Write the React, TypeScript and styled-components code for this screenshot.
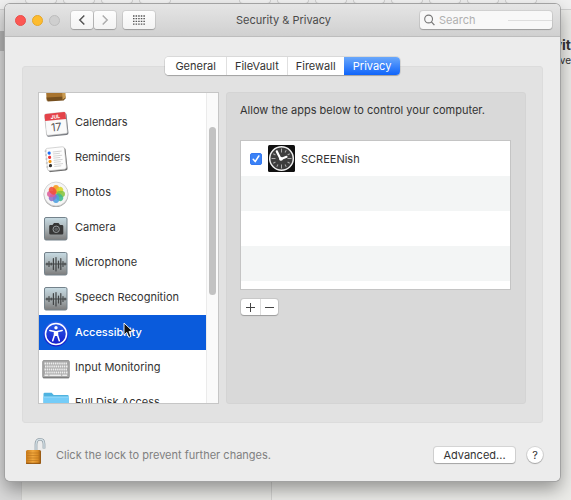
import React, { useLayoutEffect, useRef, useState } from "react";
import styled, { createGlobalStyle, css } from "styled-components";

const GlobalStyle = createGlobalStyle`
  *, *::before, *::after { box-sizing: border-box; }
  body { margin: 0; overflow: hidden; }
  body, button, input {
    font-family: Inter, "Liberation Sans", sans-serif;
    font-size: 11px;
    line-height: 14px;
    color: #333;
  }
  button, input { margin: 0; padding: 0; border: 0; }
`;

/* ---------- Desktop behind the window ---------- */

const Desktop = styled.div`
  position: relative;
  height: 100vh;
  min-height: 360px;
  padding: 4px 11px 19px 5px;
  overflow: hidden;
  background: #ebebe8;
`;

const Backdrop = styled.div`
  position: absolute;
  inset: 0;
  display: flex;
  flex-direction: column;
`;

const BackdropToolbar = styled.div`
  height: 10px;
  flex: none;
  padding-left: 25px;
  display: flex;
  gap: 6px;
  background: #f0f0f0;
  border-bottom: 1px solid #cfcfcf;
`;

const BackdropKey = styled.div<{ $apart?: boolean }>`
  width: 32px;
  height: 4px;
  flex: none;
  margin-left: ${(p) => (p.$apart ? "62px" : "0")};
  border: 1px solid #d0d0d0;
  border-top: 0;
  border-radius: 0 0 4px 4px;
  background: #f4f4f4;
`;

const BackdropBody = styled.div`
  flex: 1;
  display: grid;
  grid-template-columns: 22px 250px 1fr;
`;

const BackdropColumn = styled.div<{ $side?: boolean }>`
  border-right: 1px solid #d2d2d0;
  background: ${(p) =>
    p.$side
      ? "linear-gradient(#e2e2e2 0 21px, #b4b4b4 21px 41px, #d9d9d9 41px)"
      : "#e8e8e5"};
`;

const BackdropArticle = styled.div`
  padding: 26px 0 0;
  text-align: right;
  white-space: nowrap;
  overflow: hidden;
`;

const BackdropHeading = styled.div`
  font-size: 14px;
  line-height: 17px;
  font-weight: 700;
`;

const BackdropLine = styled.div`
  font-size: 10px;
  line-height: 14px;
`;

/* ---------- Window ---------- */

const Window = styled.main`
  position: relative;
  height: 100%;
  display: flex;
  flex-direction: column;
  background: #ececec;
  border-radius: 5px;
  overflow: hidden;
`;

const WindowShadow = styled.div`
  position: relative;
  height: 100%;
  border-radius: 5px;
  box-shadow: 0 0 0 1px #a2a2a2, 0 8px 18px rgba(0, 0, 0, 0.38);
`;

const TitleBar = styled.header`
  height: 33px;
  flex: none;
  padding: 0 8px 0 10px;
  display: grid;
  grid-template-columns: 1fr auto 1fr;
  align-items: center;
  background: linear-gradient(#e5e5e5, #d0d0d0);
  border-bottom: 1px solid #bdbdbd;
`;

const BarGroup = styled.div`
  display: flex;
  align-items: center;
`;

const Lights = styled.div`
  display: flex;
  gap: 6px;
  margin-right: 11px;
`;

const Light = styled.button<{ $color: string; $edge: string }>`
  width: 11px;
  height: 11px;
  border-radius: 50%;
  background: ${(p) => p.$color};
  border: 1px solid ${(p) => p.$edge};
`;

const BarButton = styled.button<{ $wide?: boolean }>`
  width: ${(p) => (p.$wide ? "32px" : "22px")};
  height: 18px;
  margin-right: ${(p) => (p.$wide ? "0" : "1px")};
  margin-left: ${(p) => (p.$wide ? "6px" : "0")};
  display: grid;
  place-items: center;
  border-radius: 3px;
  background: linear-gradient(#fdfdfd, #f3f3f3);
  box-shadow: 0 0 0 1px rgba(0, 0, 0, 0.07), 0 1px 1px rgba(0, 0, 0, 0.2);
`;

const Title = styled.h1`
  margin: 0;
  font-size: 11px;
  font-weight: 400;
  line-height: 14px;
  color: #4a4a4a;
`;

const SearchBox = styled.label`
  justify-self: end;
  width: 132px;
  height: 18px;
  padding-left: 4px;
  display: flex;
  align-items: center;
  gap: 4px;
  border-radius: 3px;
  background: linear-gradient(#dedede, #dedede) right center / 44px 1px no-repeat, #f8f8f8;
  box-shadow: 0 0 0 1px rgba(0, 0, 0, 0.07), 0 1px 1px rgba(0, 0, 0, 0.2);
`;

const SearchInput = styled.input`
  flex: 1;
  min-width: 0;
  background: transparent;
  outline: none;
  &::placeholder { color: #b0b0b0; opacity: 1; }
`;

const Content = styled.div`
  flex: 1;
  min-height: 0;
  padding: 20px 17px 0;
  display: flex;
  flex-direction: column;
`;

const Tabs = styled.nav`
  z-index: 1;
  align-self: center;
  display: flex;
  margin-bottom: -9px;
  border-radius: 4px;
  overflow: hidden;
  background: #fff;
  box-shadow: 0 0 0 1px rgba(0, 0, 0, 0.08), 0 1px 1px rgba(0, 0, 0, 0.22);
`;

const Tab = styled.button<{ $active: boolean }>`
  height: 18px;
  padding: 0 8px;
  min-width: 56px;
  text-align: center;
  background: #fff;
  & + & { border-left: 1px solid #e0e0e0; }
  &:first-child { padding: 0 10px; }
  ${(p) =>
    p.$active &&
    css`
      color: #fff;
      background: linear-gradient(#6aa8fb, #0f64fa);
      && { border-left-color: transparent; background-origin: border-box; }
    `}
`;

const Panel = styled.section`
  flex: 1;
  min-height: 0;
  padding: 25px 16px 18px 15px;
  display: grid;
  grid-template-columns: 181px minmax(0, 1fr);
  grid-template-rows: minmax(0, 1fr);
  gap: 7px;
  background: #e2e2e2;
  border: 1px solid #dcdcdc;
  border-radius: 3px;
`;

/* ---------- Sidebar ---------- */

const Sidebar = styled.div`
  display: flex;
  min-height: 0;
  background: #fff;
  border: 1px solid #c6c6c6;
`;

const ServiceList = styled.ul`
  flex: 1;
  margin: 0;
  padding: 0;
  list-style: none;
  overflow-y: auto;
  scrollbar-width: none;
`;

const ServiceButton = styled.button<{ $selected: boolean }>`
  width: 100%;
  height: 35px;
  padding: 0 0 2px 3px;
  display: flex;
  align-items: center;
  gap: 5px;
  text-align: left;
  background: ${(p) => (p.$selected ? "#0a5bdc" : "transparent")};
  color: ${(p) => (p.$selected ? "#fff" : "#333")};
  font-weight: ${(p) => (p.$selected ? 500 : 400)};
`;

const ServiceIcon = styled.svg`
  width: 28px;
  height: 28px;
  flex: none;
  margin-top: 5px;
`;

const ServiceName = styled.span`
  position: relative;
`;

const Pointer = styled.svg`
  position: absolute;
  left: 48px;
  top: -3px;
  width: 11px;
  height: 17px;
`;

const Track = styled.div`
  width: 12px;
  padding: 34px 2px 108px;
  display: flex;
  background: #fafafa;
  border-left: 1px solid #ebebeb;
`;

const Thumb = styled.div`
  flex: 1;
  border-radius: 4px;
  background: #c2c2c2;
`;

/* ---------- Detail pane ---------- */

const Detail = styled.div`
  padding: 10px 14px 10px 13px;
  display: flex;
  flex-direction: column;
  align-items: flex-start;
  background: #d9d9d9;
  border: 1px solid #d4d4d4;
  border-radius: 3px;
`;

const Prompt = styled.p`
  margin: 0 0 23px;
`;

const AppList = styled.ul`
  align-self: stretch;
  height: 150px;
  margin: 0 0 9px;
  padding: 0;
  list-style: none;
  border: 1px solid #c4c4c4;
  background: repeating-linear-gradient(#fff 0 35px, #f3f5f5 35px 70px);
`;

const AppRow = styled.label`
  height: 35px;
  padding-left: 9px;
  display: flex;
  align-items: center;
  gap: 6px;
`;

const Tick = styled.input`
  appearance: none;
  width: 12px;
  height: 12px;
  border-radius: 2px;
  border: 1px solid #b5b5b5;
  background: #fff;
  &:checked {
    border-color: #3578f0;
    background: #3b82f6
      url("data:image/svg+xml,%3Csvg xmlns='http://www.w3.org/2000/svg' viewBox='0 0 10 10'%3E%3Cpath d='M2.2 5.3l2 2.3L7.8 2' fill='none' stroke='white' stroke-width='1.5' stroke-linecap='round' stroke-linejoin='round'/%3E%3C/svg%3E");
  }
`;

const AppIcon = styled.svg`
  width: 27px;
  height: 27px;
`;

const Stepper = styled.div`
  display: flex;
  margin-left: 1px;
  border-radius: 3px;
  background: #fff;
  box-shadow: 0 0 0 1px rgba(0, 0, 0, 0.08), 0 1px 1px rgba(0, 0, 0, 0.22);
`;

const StepButton = styled.button`
  width: 19px;
  height: 16px;
  display: grid;
  place-items: center;
  background: transparent;
  & + & { width: 18px; border-left: 1px solid #ddd; }
`;

/* ---------- Footer ---------- */

const Footer = styled.footer`
  height: 58px;
  flex: none;
  padding: 5px 17px 0 20px;
  display: flex;
  align-items: center;
`;

const LockButton = styled.button`
  display: flex;
  margin: 0 10px 7px 0;
  background: transparent;
`;

const Hint = styled.p`
  margin: 0;
  flex: 1;
  color: #808080;
`;

const PushButton = styled.button<{ $round?: boolean }>`
  width: ${(p) => (p.$round ? "16px" : "81px")};
  height: 16px;
  margin-left: ${(p) => (p.$round ? "12px" : "0")};
  border-radius: ${(p) => (p.$round ? "50%" : "3px")};
  background: #fff;
  box-shadow: 0 0 0 1px rgba(0, 0, 0, 0.1), 0 1px 1px rgba(0, 0, 0, 0.22);
`;

/* ---------- Drawings ---------- */

const ContactsArt = () => (
  <g transform="rotate(-3 14 14)">
    <path d="M4 4h19v19l-3 2H4z" fill="#a8742f" />
    <path d="M4 22h19v2l-2 2H5z" fill="#76501f" />
    <path d="M20 4h3v19l-3 2z" fill="#c99b52" />
  </g>
);

const CalendarArt = () => (
  <g transform="rotate(-6 14 14)">
    <rect x="3.500" y="4" width="22" height="22" rx="2" fill="#777a80" />
    <rect x="3.500" y="3" width="21" height="21.500" rx="1.500" fill="#fafafa" stroke="#bcbcbc" strokeWidth=".5" />
    <path d="M3.500 4.500a1.500 1.500 0 0 1 1.500-1.500h18a1.500 1.500 0 0 1 1.500 1.500V10h-21z" fill="#e4434a" />
    <text x="14" y="8.500" fontSize="5" fontWeight="700" fill="#fff" textAnchor="middle">JUL</text>
    <text x="14" y="21" fontSize="11" fill="#555" textAnchor="middle">17</text>
  </g>
);

const RemindersArt = () => (
  <g transform="rotate(-6 14 14)">
    <rect x="5.500" y="3.500" width="19" height="23" rx="2" fill="#6b6b6b" />
    <rect x="4.500" y="2.500" width="19" height="22.500" rx="2" fill="#fdfdfd" stroke="#bbb" strokeWidth=".6" />
    {["#1f6df2", "#ee3434", "#f59a16", "#333"].map((c, i) => (
      <g key={c}>
        <circle cx="7.800" cy={7.5 + i * 4.2} r="1.600" fill={c} />
        <path d={`M11.500 ${6.7 + i * 4.2}h9M11.500 ${8.7 + i * 4.2}h7`} stroke="#bcbcbc" strokeWidth=".6" />
      </g>
    ))}
    <path d="M3.500 5h2M3.500 9h2M3.500 13h2M3.500 17h2M3.500 21h2" stroke="#aaa" strokeWidth=".8" />
  </g>
);

const petals = ["#f79a1b", "#d9d62b", "#86c440", "#3fb98c", "#4c9fe0", "#8d70c8", "#dc5c9c", "#f0503a"];

const PhotosArt = () => (
  <g>
    <circle cx="14" cy="14.800" r="12.300" fill="#a5a5a5" />
    <circle cx="14" cy="14" r="12" fill="#f5f5f5" stroke="#c9c9c9" strokeWidth=".7" />
    {petals.map((c, i) => (
      <ellipse
        key={c}
        cx="14"
        cy="9.300"
        rx="3.200"
        ry="4.300"
        fill={c}
        opacity=".88"
        transform={`rotate(${i * 45} 14 14)`}
      />
    ))}
  </g>
);

const Tile = () => (
  <>
    <defs>
      <linearGradient id="tile" x1="0" y1="0" x2="0" y2="1">
        <stop offset="0" stopColor="#c7dbe3" />
        <stop offset=".5" stopColor="#a9b2b5" />
        <stop offset="1" stopColor="#7c7c7c" />
      </linearGradient>
    </defs>
    <rect x="2.500" y="2.500" width="22.500" height="22.500" rx="1.500" fill="url(#tile)" stroke="#74828b" />
  </>
);

const CameraArt = () => (
  <g>
    <Tile />
    <path d="M8.500 10h2l1.500-2h4.500l1.500 2h2a1.300 1.300 0 0 1 1.300 1.300v6.900a1.300 1.300 0 0 1-1.300 1.300h-11.500a1.300 1.300 0 0 1-1.300-1.300v-6.900A1.300 1.300 0 0 1 8.500 10z" fill="#373737" />
    <circle cx="14.200" cy="14.300" r="3.200" fill="none" stroke="#9a9fa1" strokeWidth="1" />
    <circle cx="14.200" cy="14.300" r="1.800" fill="#5c5f60" />
  </g>
);

const WaveArt = () => (
  <g>
    <Tile />
    <path
      d="M5 13v2M7 11.500v5M9.200 13v2M11.400 8.500v11M14 7.500v13.500M16.500 11v7M18.800 8.500v11M21 11.500v5M23 13v2M4 14h20"
      stroke="#424546"
      strokeWidth="1.200"
      strokeLinecap="round"
    />
  </g>
);

const AccessibilityArt = () => (
  <g>
    <defs>
      <linearGradient id="access" x1="0" y1="0" x2="0" y2="1">
        <stop offset="0" stopColor="#2b62ea" />
        <stop offset="1" stopColor="#1414c8" />
      </linearGradient>
    </defs>
    <circle cx="14" cy="14" r="12.500" fill="url(#access)" />
    <circle cx="14" cy="14" r="10.500" fill="none" stroke="#fff" strokeWidth="1.500" />
    <circle cx="14" cy="7.800" r="1.700" fill="#fff" />
    <path d="M7.800 10.500l4.700 1v3.500l-1.800 5.800M20.200 10.500l-4.700 1v3.500l1.800 5.800" fill="none" stroke="#fff" strokeWidth="1.500" strokeLinecap="round" strokeLinejoin="round" />
    <path d="M12 11h4v5h-4z" fill="#fff" />
  </g>
);

const KeyboardArt = () => (
  <g>
    <rect x=".7" y="5.500" width="26.600" height="17.500" rx="1.200" fill="#a6a6a6" stroke="#8c8c8c" strokeWidth=".8" />
    <path d="M1 22.600h26" stroke="#717171" strokeWidth=".8" />
    {[8.5, 11.5, 14.5, 17.5].map((y, i) => (
      <path key={y} d={`M${2.5 + (i % 2) * 0.5} ${y}h23`} stroke="#ededed" strokeWidth="2" strokeDasharray="1.500 .6" />
    ))}
    <path d="M2.500 20.300h4M7.300 20.300h12M20.200 20.300h5" stroke="#ededed" strokeWidth="1.600" />
  </g>
);

const FolderArt = () => (
  <g>
    <path d="M1.500 4a1.200 1.200 0 0 1 1.200-1.200h7l2 2.200h13.800a1.200 1.200 0 0 1 1.200 1.200V25h-25.200z" fill="#4fb3e0" />
    <path d="M1.500 7h25.200v18H1.500z" fill="#74ccf8" />
    <path d="M1.500 7h25.200" stroke="#9cdcfb" />
  </g>
);

const LockArt = () => (
  <svg width="21" height="28" viewBox="0 0 21 28" aria-hidden="true">
    <defs>
      <linearGradient id="brass" x1="0" x2="1">
        <stop offset="0" stopColor="#c77818" />
        <stop offset=".45" stopColor="#f0a73e" />
        <stop offset=".8" stopColor="#d98a22" />
        <stop offset="1" stopColor="#8f5312" />
      </linearGradient>
    </defs>
    <path d="M11 14V7.500C11 4 12.700 2.200 15 2.200S19 4 19 7v4.500" fill="none" stroke="#7f8d96" strokeWidth="2.600" />
    <path d="M11 14V7.500C11 4 12.700 2.200 15 2.200S19 4 19 7v4.500" fill="none" stroke="#d3dfe5" strokeWidth="1.500" />
    <rect x="1" y="13" width="15" height="14" rx="1.500" fill="url(#brass)" />
    <path d="M2 16h12M2 18.500h12M2 21h12M2 23.500h12" stroke="#bb741d" strokeWidth=".6" />
    <path d="M1 26.300h14.500" stroke="#8a4f10" />
  </svg>
);

const ClockArt = () => (
  <AppIcon viewBox="0 0 27 27" aria-hidden="true">
    <rect width="27" height="27" rx="1.500" fill="#111" />
    <circle cx="13.500" cy="13.500" r="11.800" fill="#3d3d3d" stroke="#f0f0f0" strokeWidth="1.500" />
    {Array.from({ length: 12 }, (_, i) => (
      <path
        key={i}
        d={i % 3 === 0 ? "M13.500 3.500v4" : "M13.500 4v2.500"}
        stroke="#aaa"
        strokeWidth="1"
        transform={`rotate(${i * 30} 13.500 13.500)`}
      />
    ))}
    <path d="M8.800 6.500l3.600 7M12.500 14.200l6-2.400" stroke="#fff" strokeWidth="2.200" strokeLinecap="round" />
    <circle cx="13" cy="13.800" r="1.900" fill="#fff" />
  </AppIcon>
);

const services = [
  { name: "Contacts", Art: ContactsArt },
  { name: "Calendars", Art: CalendarArt },
  { name: "Reminders", Art: RemindersArt },
  { name: "Photos", Art: PhotosArt },
  { name: "Camera", Art: CameraArt },
  { name: "Microphone", Art: WaveArt },
  { name: "Speech Recognition", Art: WaveArt },
  { name: "Accessibility", Art: AccessibilityArt },
  { name: "Input Monitoring", Art: KeyboardArt },
  { name: "Full Disk Access", Art: FolderArt },
];

const tabs = ["General", "FileVault", "Firewall", "Privacy"];

export default function App() {
  const [tab, setTab] = useState("Privacy");
  const [service, setService] = useState("Accessibility");
  const list = useRef<HTMLUListElement>(null);

  useLayoutEffect(() => {
    if (list.current) list.current.scrollTop = 23;
  }, []);

  return (
    <Desktop>
      <GlobalStyle />
      <Backdrop aria-hidden="true">
        <BackdropToolbar>
          {Array.from({ length: 12 }, (_, i) => (
            <BackdropKey key={i} $apart={i === 4} />
          ))}
        </BackdropToolbar>
        <BackdropBody>
          <BackdropColumn $side />
          <BackdropColumn />
          <BackdropArticle>
            <BackdropHeading>vit</BackdropHeading>
            <BackdropLine>rve</BackdropLine>
          </BackdropArticle>
        </BackdropBody>
      </Backdrop>

      <WindowShadow>
        <Window>
          <TitleBar>
            <BarGroup>
              <Lights>
                <Light aria-label="Close" $color="#fc5753" $edge="#e8504c" />
                <Light aria-label="Minimize" $color="#fdbc2f" $edge="#e5a72a" />
                <Light aria-label="Zoom" $color="#cfcfcf" $edge="#bdbdbd" disabled />
              </Lights>
              <BarButton aria-label="Back">
                <svg width="8" height="12" viewBox="0 0 8 12"><path d="M6.300 1.500L1.800 6l4.500 4.500" fill="none" stroke="#555" strokeWidth="1.500" /></svg>
              </BarButton>
              <BarButton aria-label="Forward">
                <svg width="8" height="12" viewBox="0 0 8 12"><path d="M1.700 1.500L6.200 6l-4.500 4.500" fill="none" stroke="#adadad" strokeWidth="1.500" /></svg>
              </BarButton>
              <BarButton aria-label="Show All" $wide>
                <svg width="14" height="10" viewBox="0 0 14 10">
                  <path d="M1 1h12M1 3.700h12M1 6.400h12M1 9.100h12" stroke="#555" strokeWidth="1.300" strokeDasharray="1.500 1.100" />
                </svg>
              </BarButton>
            </BarGroup>
            <Title>Security &amp; Privacy</Title>
            <SearchBox>
              <svg width="11" height="12" viewBox="0 0 11 12" aria-hidden="true">
                <circle cx="4.600" cy="5" r="3.900" fill="none" stroke="#777" strokeWidth="1.100" />
                <path d="M7.400 7.900l3 3.200" stroke="#777" strokeWidth="1.300" />
              </svg>
              <SearchInput placeholder="Search" aria-label="Search" />
            </SearchBox>
          </TitleBar>

          <Content>
            <Tabs>
              {tabs.map((t) => (
                <Tab key={t} $active={t === tab} onClick={() => setTab(t)}>{t}</Tab>
              ))}
            </Tabs>
            <Panel>
              <Sidebar>
                <ServiceList ref={list}>
                  {services.map(({ name, Art }) => (
                    <li key={name}>
                      <ServiceButton $selected={name === service} onClick={() => setService(name)}>
                        <ServiceIcon viewBox="0 0 28 28" aria-hidden="true"><Art /></ServiceIcon>
                        <ServiceName>
                          {name}
                          {name === "Accessibility" && (
                            <Pointer viewBox="0 0 11 17" aria-hidden="true">
                              <path d="M1 1v12l2.800-2.600 2 4.900 2.200-.9-2-4.800h4z" fill="#111" stroke="#fff" strokeWidth=".9" />
                            </Pointer>
                          )}
                        </ServiceName>
                      </ServiceButton>
                    </li>
                  ))}
                </ServiceList>
                <Track><Thumb /></Track>
              </Sidebar>

              <Detail>
                <Prompt>Allow the apps below to control your computer.</Prompt>
                <AppList>
                  <li>
                    <AppRow>
                      <Tick type="checkbox" defaultChecked />
                      <ClockArt />
                      SCREENish
                    </AppRow>
                  </li>
                </AppList>
                <Stepper>
                  <StepButton aria-label="Add">
                    <svg width="11" height="11" viewBox="0 0 11 11"><path d="M1 5.500h9M5.500 1v9" stroke="#444" /></svg>
                  </StepButton>
                  <StepButton aria-label="Remove">
                    <svg width="11" height="11" viewBox="0 0 11 11"><path d="M1 5.500h9" stroke="#444" /></svg>
                  </StepButton>
                </Stepper>
              </Detail>
            </Panel>
          </Content>

          <Footer>
            <LockButton aria-label="Lock"><LockArt /></LockButton>
            <Hint>Click the lock to prevent further changes.</Hint>
            <PushButton>Advanced...</PushButton>
            <PushButton $round aria-label="Help">?</PushButton>
          </Footer>
        </Window>
      </WindowShadow>
    </Desktop>
  );
}
